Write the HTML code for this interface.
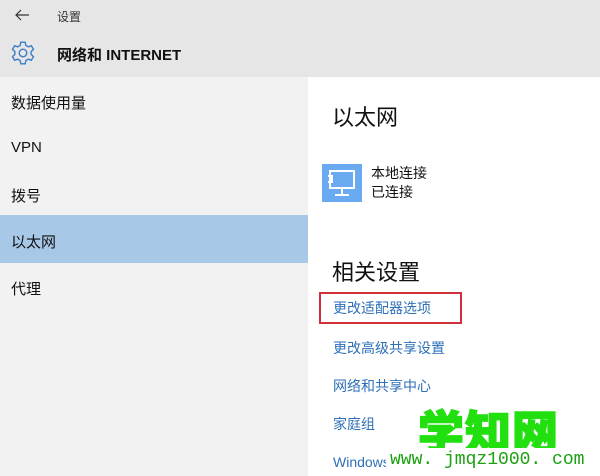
<!DOCTYPE html>
<html><head><meta charset="utf-8"><style>
*{margin:0;padding:0}
body{width:600px;height:476px;overflow:hidden;position:relative;background:#fff;font-family:"Liberation Sans","Noto Sans CJK SC",sans-serif;color:#111}
.a{position:absolute;white-space:nowrap}
.hdr{left:0;top:0;width:600px;height:77px;background:#e6e6e6}
.left{left:0;top:77px;width:308px;height:399px;background:#f2f2f2}
.sel{left:0;top:215px;width:308px;height:48px;background:#a7c8e6}
.nav{font-size:15px;left:11px}
.lnk{font-size:14px;color:#2e6fb7;left:333px}
</style></head><body>
<div class="a hdr"></div>
<div class="a left"></div>
<div class="a sel"></div>
<svg class="a" style="left:14px;top:8px" width="16" height="14" viewBox="0 0 16 14"><path d="M15 7H2M7 2L2 7l5 5" stroke="#333" stroke-width="1.2" fill="none"/></svg>
<div class="a" style="left:57px;top:8px;font-size:12px;color:#333">设置</div>
<svg class="a" style="left:10px;top:40px" width="26" height="26" viewBox="0 0 24 24"><path d="M10 2h4l.6 3 2.3 1.3 2.8-1 2 3.4-2.2 2v2.6l2.2 2-2 3.4-2.8-1-2.3 1.3L14 22h-4l-.6-3-2.3-1.3-2.8 1-2-3.4 2.2-2v-2.6l-2.2-2 2-3.4 2.8 1L9.4 5z" fill="none" stroke="#3d7ec6" stroke-width="1.3"/><circle cx="12" cy="12" r="3.5" fill="none" stroke="#3d7ec6" stroke-width="1.3"/></svg>
<div class="a" style="left:57px;top:44px;font-size:15px;font-weight:bold">网络和 INTERNET</div>
<div class="a nav" style="top:92px">数据使用量</div>
<div class="a nav" style="top:139px">VPN</div>
<div class="a nav" style="top:185px">拨号</div>
<div class="a nav" style="top:231px">以太网</div>
<div class="a nav" style="top:278px">代理</div>
<div class="a" style="left:332px;top:100px;font-size:22px">以太网</div>
<div class="a" style="left:322px;top:164px;width:40px;height:38px;background:#6aaaf0"></div>
<svg class="a" style="left:322px;top:164px" width="40" height="38" viewBox="0 0 40 38"><path d="M8 7h24v17H8zM20 24v7M13 31h14M6 12h4v6H6" stroke="#fff" stroke-width="2" fill="none"/></svg>
<div class="a" style="left:371px;top:164px;font-size:14px;line-height:19px">本地连接<br>已连接</div>
<div class="a" style="left:332px;top:255px;font-size:22px">相关设置</div>
<div class="a" style="left:319px;top:292px;width:139px;height:28px;border:2px solid #d0303a"></div>
<div class="a lnk" style="top:298px">更改适配器选项</div>
<div class="a lnk" style="top:338px">更改高级共享设置</div>
<div class="a lnk" style="top:376px">网络和共享中心</div>
<div class="a lnk" style="top:414px">家庭组</div>
<div class="a lnk" style="top:452px">Windows 防火墙</div>
<div class="a" style="left:418px;top:397px;font-size:46px;font-weight:900;color:#22e010;letter-spacing:1px;-webkit-text-stroke:1.5px #22e010">学知网</div>
<div class="a" style="left:386px;top:448px;width:214px;height:28px;background:#fff"></div>
<div class="a" style="left:390px;top:450px;font-size:18px;color:#1aa010;font-family:'Liberation Mono',monospace">www. jmqz1000. com</div>
</body></html>
